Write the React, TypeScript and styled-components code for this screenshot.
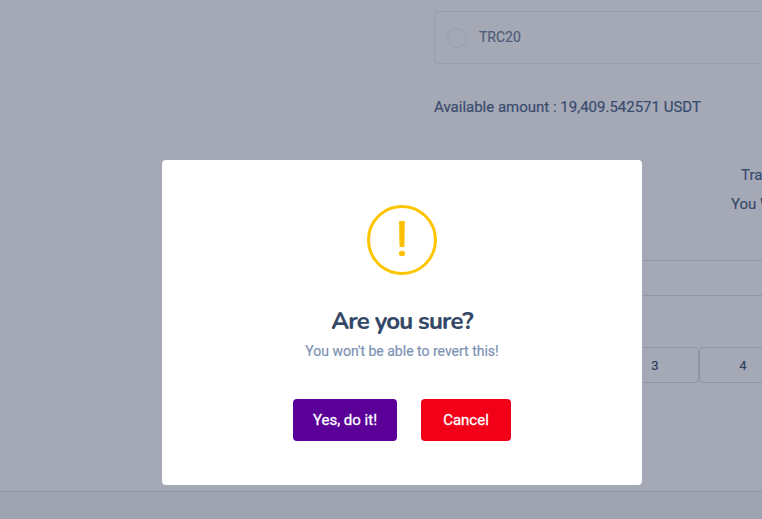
import React from 'react';
import styled, { createGlobalStyle } from 'styled-components';

const GlobalStyle = createGlobalStyle`
  *, *::before, *::after { box-sizing: border-box; }
  body {
    margin: 0;
    overflow: hidden;
    background: #a5a9b5;
    font-family: Roboto, "Liberation Sans", sans-serif;
    -webkit-text-stroke: 0.2px currentColor;
  }
`;

const Page = styled.div`
  display: flex;
  flex-direction: column;
  height: 519px;
  overflow: hidden;
`;

const Content = styled.main`
  display: flex;
  flex-direction: column;
  flex: none;
  height: 491px;
  padding: 11px 0 0 434px;
`;

const NetworkOption = styled.label`
  display: flex;
  align-items: center;
  flex: none;
  width: 420px;
  height: 53px;
  padding: 0 12px;
  border: 1px solid #9a9fad;
  border-radius: 4px;
  color: #505d78;
  font-size: 14px;
  line-height: 20px;
`;

const RadioMark = styled.span`
  width: 20px;
  height: 20px;
  margin-right: 12px;
  border: 1px solid #999eac;
  border-radius: 50%;
`;

const OptionName = styled.span`
  margin-top: -1px;
`;

const Available = styled.p`
  margin: 32px 0 0;
  color: #394c70;
  font-size: 15px;
  line-height: 22px;
  white-space: nowrap;
`;

const Summary = styled.div`
  display: flex;
  flex-direction: column;
  gap: 7px;
  margin-top: 46px;
`;

const SummaryRow = styled.div<{ $indent: number }>`
  padding-left: ${({ $indent }) => $indent}px;
  color: #394c70;
  font-size: 15px;
  line-height: 22px;
  white-space: nowrap;
`;

const Field = styled.div`
  flex: none;
  width: 420px;
  height: 36px;
  margin-top: 45px;
  border: 1px solid #8e95ac;
  border-radius: 4px;
`;

const Keypad = styled.div`
  display: flex;
  flex: none;
  margin-top: 51px;
  padding-left: 177px;
`;

const Key = styled.div`
  display: flex;
  flex: none;
  align-items: center;
  justify-content: center;
  width: 88px;
  height: 36px;
  border: 1px solid #8e95ac;
  border-radius: 4px;
  color: #2e415f;
  font-size: 13px;
`;

const Footer = styled.footer`
  flex: 1;
  border-top: 1px solid #8f96a5;
  background: #9ea4b2;
`;

const Overlay = styled.div`
  position: fixed;
  inset: 0;
  display: flex;
  align-items: flex-start;
  padding: 160px 0 0 162px;
`;

const Dialog = styled.section`
  display: flex;
  flex-direction: column;
  align-items: center;
  width: 480px;
  height: 325px;
  padding-top: 45px;
  border-radius: 4px;
  background: #fff;
`;

const WarningMark = styled.svg`
  display: block;
  flex: none;
  width: 70px;
  height: 70px;
`;

const Title = styled.h2`
  margin: 31px 0 0;
  color: #334766;
  font-family: Nunito, Lato, sans-serif;
  font-size: 24px;
  font-weight: 700;
  line-height: 30px;
  letter-spacing: -0.8px;
  white-space: nowrap;
`;

const Message = styled.p`
  margin: 5px 0 0;
  color: #7c93b4;
  font-size: 14px;
  line-height: 20px;
  white-space: nowrap;
`;

const Actions = styled.div`
  display: flex;
  gap: 24px;
  margin-top: 38px;
`;

const ActionButton = styled.button<{ $tone: string; $width: number }>`
  width: ${({ $width }) => $width}px;
  height: 42px;
  padding: 0;
  border: 0;
  border-radius: 4px;
  background: ${({ $tone }) => $tone};
  color: #fff;
  font-family: inherit;
  font-size: 15px;
  -webkit-text-stroke: 0.3px #fff;
  white-space: nowrap;
`;

export default function App() {
  return (
    <>
      <GlobalStyle />
      <Page>
        <Content>
          <NetworkOption>
            <RadioMark />
            <OptionName>TRC20</OptionName>
          </NetworkOption>
          <Available>Available amount : 19,409.542571 USDT</Available>
          <Summary>
            <SummaryRow $indent={307}>Tra</SummaryRow>
            <SummaryRow $indent={297}>You W</SummaryRow>
          </Summary>
          <Field />
          <Keypad>
            <Key>3</Key>
            <Key>4</Key>
          </Keypad>
        </Content>
        <Footer />
      </Page>
      <Overlay>
        <Dialog role="alertdialog" aria-label="Are you sure?">
          <WarningMark viewBox="0 0 70 70" aria-hidden="true">
            <circle cx="35" cy="35" r="33.5" fill="none" stroke="#fdc500" strokeWidth="3" />
            <path d="M32.1 16h5.7l-.4 26h-4.9z" fill="#fdbf00" />
            <ellipse cx="35" cy="48.5" rx="3.1" ry="2.8" fill="#fdbf00" />
          </WarningMark>
          <Title>Are you sure?</Title>
          <Message>You won't be able to revert this!</Message>
          <Actions>
            <ActionButton $tone="#5a0099" $width={104}>Yes, do it!</ActionButton>
            <ActionButton $tone="#f10018" $width={90}>Cancel</ActionButton>
          </Actions>
        </Dialog>
      </Overlay>
    </>
  );
}
